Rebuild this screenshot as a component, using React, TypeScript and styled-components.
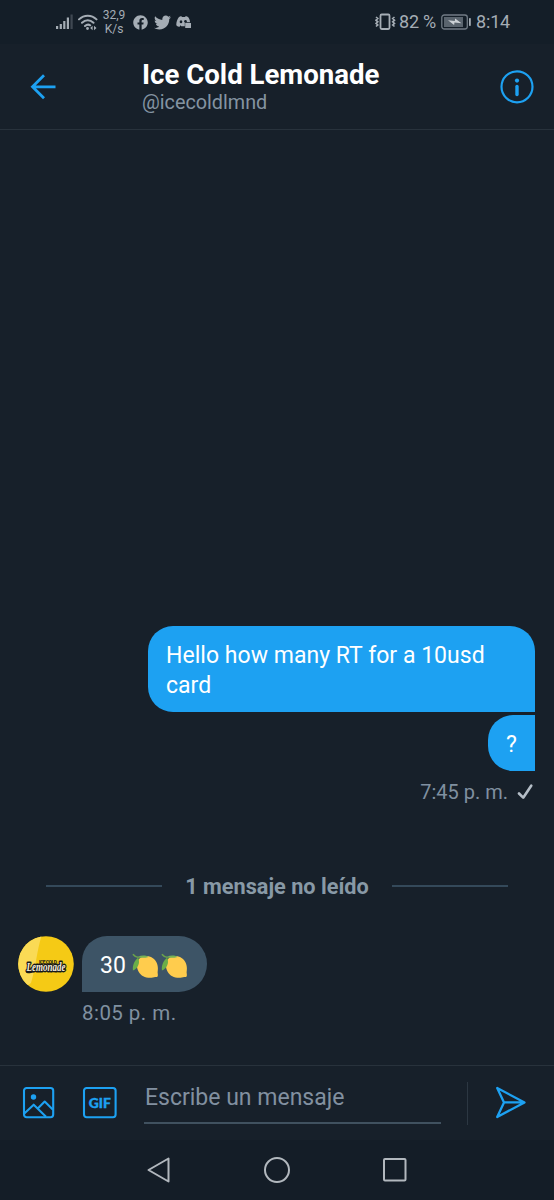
import React from 'react';
import styled, { createGlobalStyle } from 'styled-components';
import { FaFacebook, FaTwitter } from 'react-icons/fa';

const GlobalStyle = createGlobalStyle`
  * { box-sizing: border-box; }
  body { margin: 0; background: #17202a; }
  svg { display: block; flex: none; }
`;

const blue = '#1da1f2';

const Screen = styled.div`
  width: 554px;
  height: 1200px;
  display: flex;
  flex-direction: column;
  background: #17202a;
  color: #fff;
  font-family: Roboto, 'Liberation Sans', sans-serif;
  overflow: hidden;
`;

const StatusBar = styled.div`
  height: 44px;
  flex: none;
  display: flex;
  align-items: center;
  justify-content: space-between;
  padding: 0 44px 0 56px;
  background: #141e28;
  color: #a5adb5;
`;

const StatusGroup = styled.div`
  display: flex;
  align-items: center;
`;

const Speed = styled.div`
  width: 24px;
  margin: 0 7px 0 4px;
  font-size: 12px;
  line-height: 14px;
  text-align: center;
  white-space: nowrap;
`;

const StatusText = styled.span<{ $gap?: number }>`
  margin-left: ${(p) => p.$gap ?? 0}px;
  font-size: 18px;
  line-height: 24px;
  letter-spacing: -0.2px;
  white-space: nowrap;
`;

const IconSlot = styled.span<{ $gap: number }>`
  display: block;
  margin-left: ${(p) => p.$gap}px;
`;

const Header = styled.header`
  height: 86px;
  flex: none;
  display: flex;
  align-items: center;
  padding: 0 20px 0 30px;
  border-bottom: 1px solid #28323c;
`;

const Titles = styled.div`
  flex: 1;
  margin-left: 86px;
`;

const Name = styled.h1`
  margin: 0;
  font-size: 27.6px;
  font-weight: 700;
  line-height: 31px;
  white-space: nowrap;
`;

const Handle = styled.div`
  font-size: 19.8px;
  line-height: 25px;
  color: #8494a2;
`;

const Thread = styled.main`
  flex: 1;
  display: flex;
  flex-direction: column;
  justify-content: flex-end;
  padding: 0 19px 40px 18px;
`;

const Bubble = styled.div<{ $own?: boolean; $radius: string; $width: number }>`
  width: ${(p) => p.$width}px;
  padding: 15px 18px 11px;
  border-radius: ${(p) => p.$radius};
  background: ${(p) => (p.$own ? blue : '#3d5466')};
  font-size: 23px;
  line-height: 30px;
  letter-spacing: 0.03px;
`;

const Outgoing = styled.div`
  display: flex;
  flex-direction: column;
  align-items: flex-end;
  gap: 3px;
`;

const Time = styled.div`
  display: flex;
  align-items: center;
  gap: 9px;
  font-size: 20px;
  line-height: 24px;
  color: #8090a0;
`;

const SentTime = styled(Time)`
  margin: 6px 2px 0 0;
`;

const ReceivedTime = styled(Time)`
  margin: 9px 0 0 64px;
  font-size: 20.5px;
  letter-spacing: 0.45px;
`;

const Unread = styled.div`
  display: flex;
  align-items: center;
  justify-content: space-between;
  margin: 70px 27px 36px 28px;
  font-size: 21.7px;
  font-weight: 700;
  line-height: 26px;
  color: #8899a6;
  white-space: nowrap;
  &::before, &::after {
    content: '';
    height: 2px;
    width: 116px;
    flex: none;
    margin-bottom: 2px;
    background: #34495a;
  }
`;

const Incoming = styled.div`
  display: flex;
  align-items: center;
  gap: 7px;
`;

const IncomingText = styled.div`
  display: flex;
  align-items: center;
  gap: 1px;
`;

const LemonGap = styled.span`
  width: 6px;
`;

const Composer = styled.footer`
  height: 75px;
  flex: none;
  display: flex;
  align-items: center;
  padding: 0 26px 0 21px;
  border-top: 1px solid #28323c;
`;

const Field = styled.div`
  width: 297px;
  height: 44px;
  margin: -2px 26px 0 27px;
  padding: 3px 0 0 1px;
  border-bottom: 2px solid #40515f;
  font-size: 23px;
  line-height: 30px;
  color: #8290a0;
  white-space: nowrap;
`;

const Divider = styled.div`
  width: 1px;
  height: 43px;
  margin-right: 27px;
  background: #2c3742;
`;

const NavBar = styled.nav`
  height: 60px;
  flex: none;
  display: flex;
  align-items: center;
  justify-content: space-between;
  padding: 0 146px 0 145px;
  background: #141d27;
`;

const Signal = () => (
  <svg width="18" height="16" viewBox="0 0 18 16" fill="#a5adb5">
    <rect x="0" y="12" width="2.2" height="3" />
    <rect x="3.7" y="10" width="2.2" height="5" />
    <rect x="7.2" y="7" width="2.2" height="8" />
    <rect x="10.8" y="3.5" width="2.2" height="11.5" />
    <rect x="14.5" y="0.5" width="2.2" height="14.5" opacity=".3" />
  </svg>
);

const Wifi = () => (
  <svg width="20" height="17" viewBox="0 0 20 17" fill="none" stroke="#a5adb5" strokeWidth="2" strokeLinecap="round">
    <path d="M1 5.4C6 .5 13.5.5 18.5 5.4M4 8.8c3.5-3.3 8-3.3 11.5 0M7 12c1.8-1.6 3.6-1.7 5.2-.7" />
    <circle cx="9.5" cy="14.5" r="1.4" fill="#a5adb5" stroke="none" />
    <path d="M14.6 11.7v4.6l-2.5-2.3zM16 11.7v4.6l2.5-2.3z" fill="#a5adb5" stroke="none" />
  </svg>
);

const Discord = () => (
  <svg width="16" height="14" viewBox="0 0 16 14">
    <path d="M3 2 5.2 1l.7 1h3.2l.7-1 2.3 1c1.2 1.7 1.9 3.4 1.9 5.2H8.8v4H5.3l-.8-1-1.2 1.7C1.7 11.6.8 11 .3 10 .3 7 1.2 4.4 3 2Z" fill="#a5adb5" />
    <ellipse cx="5" cy="6.7" rx="1.3" ry="1.5" fill="#141e28" />
    <ellipse cx="9.5" cy="6.3" rx="1.3" ry="1.2" fill="#141e28" />
    <rect x="9.2" y="8" width="5.8" height="5" fill="#a5adb5" />
  </svg>
);

const Vibrate = () => (
  <svg width="21" height="18" viewBox="0 0 21 18" fill="none" stroke="#a5adb5" strokeWidth="1.6">
    <rect x="5.5" y="1.5" width="9" height="14.5" rx="1.2" strokeWidth="1.8" />
    <path d="m1 4 1.8 1.5L1 7.2l1.8 1.6L1 10.4l1.8 1.5L1 13.5M19.5 4l-1.8 1.5 1.8 1.7-1.8 1.6 1.8 1.6-1.8 1.5 1.8 1.6" />
  </svg>
);

const Battery = () => (
  <svg width="31" height="16" viewBox="0 0 31 16">
    <rect x=".8" y="1" width="25.5" height="14" rx="2.5" fill="none" stroke="#717b85" strokeWidth="1.3" />
    <rect x="3" y="3" width="19" height="10" fill="#5a646e" />
    <path d="m7 6.3 6.8.6.3-2.3 6.4 4.6-7-.6-.4 2.4Z" fill="#cdd2d7" />
    <rect x="28" y="4" width="1.8" height="8" rx=".7" fill="#a5adb5" />
  </svg>
);

const BackArrow = () => (
  <svg width="26" height="26" viewBox="0 0 26 26" fill="none" stroke={blue} strokeWidth="2.8">
    <path d="M14 1.3 2.5 12.8 14 24.3M2.5 12.8h23" />
  </svg>
);

const InfoIcon = () => (
  <svg width="34" height="34" viewBox="0 0 34 34" fill="none" stroke={blue}>
    <circle cx="17" cy="16.8" r="15.5" strokeWidth="2.2" />
    <circle cx="17" cy="10.6" r="2.1" fill={blue} stroke="none" />
    <path d="M17 16.5v8" strokeWidth="3.4" strokeLinecap="round" />
  </svg>
);

const Check = () => (
  <svg width="16" height="16" viewBox="0 0 16 16" fill="none" stroke="#b5bec7" strokeWidth="2.6" strokeLinecap="round" strokeLinejoin="round">
    <path d="m2 9.5 4.2 4.2 8-12" />
  </svg>
);

const Lemon = () => (
  <svg width="28" height="28" viewBox="0 0 28 28">
    <path d="M7 7C10 3.5 15 3.3 19 5c4.5 2.2 7 6.5 6.9 11.5 0 2.3-.5 3.6-.1 5.4.3 1.7-.1 3.2-1.6 3.2-1.4 0-2.7.6-4.7.7-5.5.5-10.5-1.800-13-6.4C4.3 15.5 4.3 10 7 7Z" fill="#ffcc4d" />
    <path d="M6.2 5.8C2.6 8.5.3 13 .9 18.5c4.6-1.7 7.6-7 5.3-12.7Z" fill="#6bae48" />
    <path d="M5.7 4.9C9.5 3 13.5 3 16.500 4.9 13 5.900 8.7 6.400 5.7 4.900Z" fill="#77b255" />
    <path d="M.9 2.2C2.300 4 4.200 5.300 6.800 5.600" stroke="#6ba34a" strokeWidth="1.5" fill="none" />
  </svg>
);

const Avatar = () => (
  <svg width="57" height="56" viewBox="0 0 57 56">
    <defs>
      <clipPath id="avatar"><circle cx="28" cy="28" r="27.8" /></clipPath>
    </defs>
    <g clipPath="url(#avatar)">
      <rect width="57" height="56" fill="#f5ca15" />
      <path d="M0 0h23.5c-4.5 14-6 33-10.5 47L0 56Z" fill="#fada55" />
    </g>
    <path d="M8 36.2c1-2 3-3 5-3.5l33-.6c1.500.3 2 1 1 2.2-8 1.400-24 .2-34 2.600-2 .4-4.500.4-5-.7Z" fill="#17181a" />
    <text x="21" y="27.7" fontFamily="Roboto, sans-serif" fontSize="5" fontWeight="900" fill="#2c2817" textLength="18">ICE COLD</text>
    <text x="8.500" y="35" fontFamily="'Liberation Serif', serif" fontStyle="italic" fontWeight="700" fontSize="12" fill="#f6eedb" stroke="#17181a" strokeWidth="2.8" strokeLinejoin="round" paintOrder="stroke" textLength="39" lengthAdjust="spacingAndGlyphs">Lemonade</text>
  </svg>
);

const ImageIcon = () => (
  <svg width="34" height="34" viewBox="0 0 34 34" fill="none" stroke={blue} strokeWidth="2.1" strokeLinejoin="round">
    <rect x="3" y="2" width="29.2" height="29.2" rx="2.6" />
    <path d="m3.3 27.5 9.4-8.8 12.3 12M17 22.3l6.7-6.7 8.3 8.2" />
    <circle cx="12.5" cy="11" r="2.7" fill={blue} stroke="none" />
  </svg>
);

const GifIcon = () => (
  <svg width="35" height="34" viewBox="0 0 35 34">
    <rect x="2" y="2" width="31.6" height="29.2" rx="2.6" fill="none" stroke={blue} strokeWidth="2.1" />
    <text x="6.8" y="21.5" fontFamily="Lato, sans-serif" fontWeight="900" fontSize="14" fill={blue} stroke={blue} strokeWidth=".4" textLength="22" lengthAdjust="spacingAndGlyphs">GIF</text>
  </svg>
);

const SendIcon = () => (
  <svg width="32" height="34" viewBox="0 0 32 34" fill="none" stroke={blue} strokeWidth="2.3" strokeLinejoin="round" strokeLinecap="round">
    <path d="M2.2 2 29.5 16.4 2.2 31 9 16.4ZM9 16.4h20" />
  </svg>
);

const NavBack = () => (
  <svg width="26" height="28" viewBox="0 0 26 28" fill="none" stroke="#b2b8be" strokeWidth="2" strokeLinejoin="round">
    <path d="M23.5 2.5v23L3.5 14Z" />
  </svg>
);

const NavHome = () => (
  <svg width="28" height="28" viewBox="0 0 28 28" fill="none" stroke="#b2b8be" strokeWidth="2">
    <circle cx="14" cy="14" r="12" />
  </svg>
);

const NavRecent = () => (
  <svg width="26" height="28" viewBox="0 0 26 28" fill="none" stroke="#b2b8be" strokeWidth="2">
    <rect x="2" y="3" width="21.5" height="21.5" rx="1" />
  </svg>
);

export default function App() {
  return (
    <Screen>
      <GlobalStyle />
      <StatusBar>
        <StatusGroup>
          <Signal />
          <IconSlot $gap={4}><Wifi /></IconSlot>
          <Speed>32,9<br />K/s</Speed>
          <FaFacebook size={15} />
          <IconSlot $gap={6}><FaTwitter size={17} /></IconSlot>
          <IconSlot $gap={5}><Discord /></IconSlot>
        </StatusGroup>
        <StatusGroup>
          <Vibrate />
          <StatusText $gap={3}>82 %</StatusText>
          <IconSlot $gap={5}><Battery /></IconSlot>
          <StatusText $gap={4}>8:14</StatusText>
        </StatusGroup>
      </StatusBar>

      <Header>
        <BackArrow />
        <Titles>
          <Name>Ice Cold Lemonade</Name>
          <Handle>@icecoldlmnd</Handle>
        </Titles>
        <InfoIcon />
      </Header>

      <Thread>
        <Outgoing>
          <Bubble $own $width={387} $radius="25px 25px 0 25px">Hello how many RT for a 10usd card</Bubble>
          <Bubble $own $width={47} $radius="25px 0 0 25px">?</Bubble>
          <SentTime>7:45 p. m.<Check /></SentTime>
        </Outgoing>
        <Unread>1 mensaje no leído</Unread>
        <Incoming>
          <Avatar />
          <Bubble $width={125} $radius="25px 28px 28px 0">
            <IncomingText>30<LemonGap /><Lemon /><Lemon /></IncomingText>
          </Bubble>
        </Incoming>
        <ReceivedTime>8:05 p. m.</ReceivedTime>
      </Thread>

      <Composer>
        <ImageIcon />
        <IconSlot $gap={27}><GifIcon /></IconSlot>
        <Field>Escribe un mensaje</Field>
        <Divider />
        <SendIcon />
      </Composer>

      <NavBar>
        <NavBack />
        <NavHome />
        <NavRecent />
      </NavBar>
    </Screen>
  );
}
